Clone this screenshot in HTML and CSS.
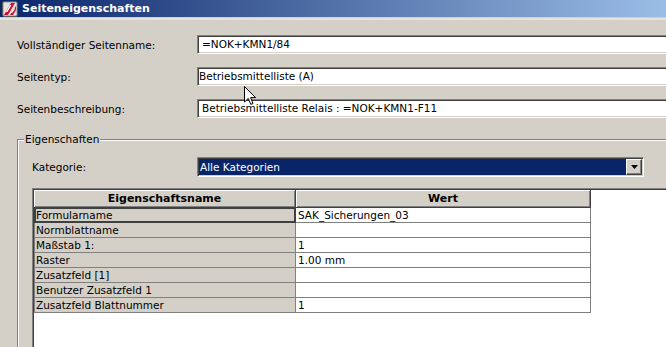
FILE: index.html
```html
<!DOCTYPE html>
<html lang="de">
<head>
    <meta charset="UTF-8">
    <meta name="viewport" content="width=device-width, initial-scale=1.0">
    <title>Seiteneigenschaften</title>
    <link rel="stylesheet" href="styles.css">
</head>
<body>
    <div class="window">
        <div class="titlebar">
            <svg class="title-icon" width="16" height="16" viewBox="0 0 16 16">
                <rect x="0.5" y="0.5" width="15" height="15" rx="2" fill="#b9b9b9" stroke="#5a5a5a"/>
                <rect x="2" y="2" width="12" height="12" fill="#e4e4e4"/>
                <path d="M2 14 L9 2 L13 2 L6 14 Z" fill="#c8102e"/>
                <path d="M8 14 L14 5 L14 9 L11 14 Z" fill="#c8102e"/>
                <path d="M4 11 L8 4 L9.5 4 L5.5 11 Z" fill="#ffffff"/>
                <path d="M9 12 L12.5 7 L13 8 L10 12 Z" fill="#ffffff"/>
            </svg>
            <span class="title-text">Seiteneigenschaften</span>
        </div>

        <div class="dialog">
            <div class="field">
                <label class="field-label">Vollständiger Seitenname:</label>
                <div class="textbox">=NOK+KMN1/84</div>
            </div>
            <div class="field">
                <label class="field-label">Seitentyp:</label>
                <div class="textbox textbox-tight">Betriebsmittelliste (A)</div>
            </div>
            <div class="field">
                <label class="field-label">Seitenbeschreibung:</label>
                <div class="textbox">Betriebsmittelliste Relais : =NOK+KMN1-F11</div>
            </div>

            <div class="group">
                <span class="group-title">Eigenschaften</span>
                <div class="field field-cat">
                    <label class="field-label">Kategorie:</label>
                    <div class="combo">
                        <span class="combo-value">Alle Kategorien</span>
                        <span class="combo-btn">
                            <svg width="7" height="4" viewBox="0 0 7 4"><path d="M0 0 H7 L3.5 4 Z" fill="#000"/></svg>
                        </span>
                    </div>
                </div>

                <div class="grid">
                    <table class="props">
                        <thead>
                            <tr>
                                <th class="col-name">Eigenschaftsname</th>
                                <th class="col-value">Wert</th>
                            </tr>
                        </thead>
                        <tbody>
                            <tr class="selected"><td class="name">Formularname</td><td>SAK_Sicherungen_03</td></tr>
                            <tr><td class="name">Normblattname</td><td></td></tr>
                            <tr><td class="name">Maßstab 1:</td><td>1</td></tr>
                            <tr><td class="name">Raster</td><td>1.00 mm</td></tr>
                            <tr><td class="name">Zusatzfeld [1]</td><td></td></tr>
                            <tr><td class="name">Benutzer Zusatzfeld 1</td><td></td></tr>
                            <tr><td class="name">Zusatzfeld Blattnummer</td><td>1</td></tr>
                        </tbody>
                    </table>
                </div>
            </div>
        </div>

        <svg class="cursor" width="13" height="20" viewBox="0 0 13 20">
            <path d="M0.5 0.5 L0.5 16 L4.3 12.4 L6.8 18.4 L9 17.5 L6.6 11.6 L11.6 11.6 Z" fill="#fff" stroke="#000" stroke-width="1"/>
        </svg>
    </div>
</body>
</html>
```

FILE: styles.css
```css
html, body {
    margin: 0;
    height: 100%;
    overflow: hidden;
}

body {
    background-color: #d4d0c8;
    font-family: "DejaVu Sans", Verdana, sans-serif;
    font-size: 10.5px;
    color: #000;
}

.window {
    position: relative;
    width: 720px;
}

.titlebar {
    height: 17px;
    display: flex;
    align-items: center;
    padding-left: 2px;
    background: linear-gradient(to right, #0a246a, #a6caf0);
    border-bottom: 1px solid #d4d0c8;
    box-shadow: 0 2px 0 #e6e3dc;
}

.title-icon {
    margin-right: 4px;
}

.title-text {
    color: #fff;
    font-weight: bold;
    font-size: 11px;
}

.dialog {
    padding-top: 17px;
}

.field {
    display: flex;
    align-items: center;
    padding-left: 17px;
    margin-bottom: 13px;
}

.field-label {
    width: 180px;
    flex: none;
}

.textbox {
    flex: 1;
    height: 17px;
    line-height: 17px;
    padding-left: 4px;
    background: #fff;
    border: 1px solid;
    border-color: #808080 #fff #fff #808080;
    box-shadow: inset 1px 1px #404040, inset -1px -1px #d4d0c8;
    white-space: nowrap;
}

.textbox-tight {
    padding-left: 1px;
}

.group {
    margin: 21px 0 0 17px;
    height: 220px;
    border-top: 1px solid #808080;
    border-left: 1px solid #808080;
    box-shadow: inset 1px 1px #fff;
}

.group-title {
    display: block;
    width: max-content;
    margin: -7px 0 0 6px;
    padding: 0 1px;
    line-height: 13px;
    background: #d4d0c8;
}

.field-cat {
    padding-left: 14px;
    margin: 11px 0 0;
}

.field-cat .field-label {
    width: 165px;
}

.combo {
    width: 443px;
    height: 16px;
    display: flex;
    align-items: stretch;
    border: 1px solid;
    border-color: #808080 #fff #fff #808080;
    box-shadow: inset 1px 1px #404040, inset -1px -1px #d4d0c8;
    padding: 1px;
}

.combo-value {
    flex: 1;
    background: #0a246a;
    color: #fff;
    line-height: 16px;
    padding-left: 1px;
}

.combo-btn {
    width: 16px;
    display: flex;
    align-items: center;
    justify-content: center;
    background: #d4d0c8;
    border: 1px solid;
    border-color: #fff #404040 #404040 #fff;
    box-shadow: inset -1px -1px #808080;
    box-sizing: border-box;
}

.grid {
    margin: 11px 0 0 14px;
    height: 200px;
    background: #fff;
    border-top: 1px solid #808080;
    border-left: 1px solid #808080;
    box-shadow: inset 1px 1px #404040;
    padding: 1px 0 0 1px;
}

.props {
    border-collapse: separate;
    border-spacing: 0;
    table-layout: fixed;
}

.props th {
    height: 17px;
    padding: 0;
    background: #d4d0c8;
    font-weight: bold;
    font-size: 11px;
    text-align: center;
    border-right: 1px solid #404040;
    border-bottom: 1px solid #404040;
    box-shadow: inset 1px 1px #fff, inset -1px -1px #808080;
}

.col-name {
    width: 261px;
}

.col-value {
    width: 294px;
}

.props td {
    height: 14px;
    line-height: 14px;
    padding: 0 0 0 2px;
    border-right: 1px solid #808080;
    border-bottom: 1px solid #808080;
    white-space: nowrap;
    overflow: hidden;
}

.props td.name {
    background: #d4d0c8;
    border-left: 1px solid #808080;
    padding-left: 1px;
}

.props tr.selected td.name {
    box-shadow: inset 0 0 0 1px #404040;
    border-color: #404040;
}

.cursor {
    position: absolute;
    left: 244px;
    top: 86px;
}
```
